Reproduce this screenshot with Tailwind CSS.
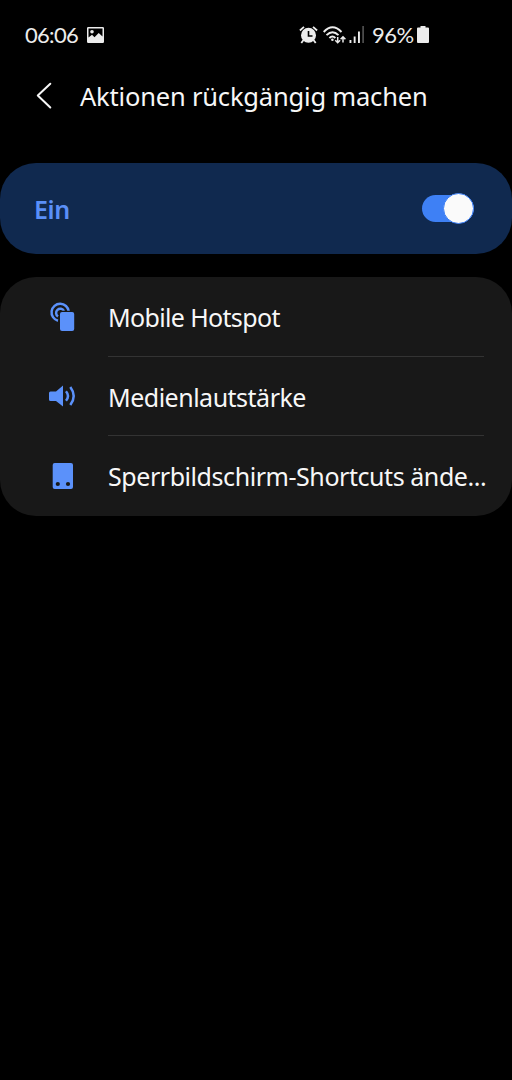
<!DOCTYPE html>
<html lang="de">
<head>
    <meta charset="UTF-8">
    <meta name="viewport" content="width=device-width, initial-scale=1.0">
    <script src="https://cdn.jsdelivr.net/npm/@tailwindcss/browser@4"></script>
    <title>Aktionen rückgängig machen</title>
</head>
<body class="bg-black">
    <main class="w-[512px] h-[1080px] bg-black text-[#f7f7f7] font-['Noto_Sans',sans-serif] overflow-hidden">

        <!-- status bar -->
        <div class="flex items-center h-[69px] pl-[25px] text-[#ececec] font-['Lato',sans-serif] text-[22px] leading-none">
            <span class="w-[62px] whitespace-nowrap tracking-[-0.7px]">06:06</span>
            <svg class="w-[17px] h-[16px]" viewBox="0 0 17 16">
                <path fill="currentColor" fill-rule="evenodd" d="M1.2 0h14.6Q17 0 17 1.2v13.6Q17 16 15.8 16H1.200Q0 16 0 14.8V1.200Q0 0 1.200 0ZM1.5 1.5V10.500l3.500-2.700 2.500 2.400 4.200-4.200 3.800 3.500V1.500Z"/>
                <circle cx="5" cy="4.700" r="1.800" fill="currentColor"/>
            </svg>

            <div class="flex items-center ml-[195px]">
                <svg class="w-[19px] h-[18px]" viewBox="0 0 19 18" fill="none" stroke="currentColor">
                    <circle cx="9.500" cy="9.300" r="7.500" fill="currentColor" stroke="none"/>
                    <path stroke-width="1.800" d="M.900 4.500 5 .900M18.100 4.500 14 .900M4.500 14l-2.200 3M14.500 14l2.200 3"/>
                    <path stroke="#000" stroke-width="1.600" d="M9.500 5v5h4"/>
                </svg>
                <svg class="w-[24px] h-[18px] ml-[5px]" viewBox="0 0 24 18" fill="none" stroke="currentColor">
                    <path stroke-width="1.900" d="M.700 6Q9.500-3.500 18.500 6M3.500 9.200q6-6 12 0M6.400 12q3-2.800 6 0"/>
                    <circle cx="9.400" cy="13.700" r="1.300" fill="currentColor" stroke="none"/>
                    <path stroke-width="1.500" d="M14.700 11v5.500M12.300 14.200l2.400 2.500 2.400-2.500M20 16.500V11M17.600 13.300l2.400-2.500 2.400 2.500"/>
                </svg>
                <svg class="w-[16px] h-[17px] ml-[2px]" viewBox="0 0 16 17" fill="currentColor">
                    <path d="M.500 14h1.900V17H.500zM4.700 10.500h1.900V17H4.700zM9 5.500h1.900V17H9z"/>
                    <path fill="#555" d="M13.300 0h1.600v17h-1.600z"/>
                </svg>
                <span class="w-[44px] ml-[7px] whitespace-nowrap tracking-[-0.5px]">96%</span>
                <svg class="w-[12px] h-[17px] ml-[1px]" viewBox="0 0 12 17" fill="currentColor">
                    <path d="M3.500 0h5v1.600H11q1 0 1 1V16q0 1-1 1H1q-1 0-1-1V2.600q0-1 1-1h2.500z"/>
                </svg>
            </div>
        </div>

        <!-- header -->
        <header class="flex items-center h-[54px] pl-[36px]">
            <svg class="w-[16px] h-[28px]" viewBox="0 0 16 28" fill="none" stroke="currentColor" stroke-width="2" stroke-linecap="round" stroke-linejoin="round">
                <path d="M14.300 1.800 1.800 13.500l12.500 12"/>
            </svg>
            <h1 class="mt-[2px] ml-[28px] text-[25.5px] leading-none whitespace-nowrap tracking-[-0.19px]">Aktionen rückgängig machen</h1>
        </header>

        <!-- main switch -->
        <section class="flex items-center justify-between h-[91px] mt-[40px] pl-[34px] pr-[38px] rounded-[36px] bg-[#10294f]">
            <span class="mt-[2px] text-[25px] leading-none font-semibold tracking-[-0.4px] text-[#5a8ff8]">Ein</span>
            <div class="flex items-center justify-end w-[52px] h-[27px] rounded-full bg-[#3e80f5]">
                <div class="w-[31px] h-[31px] shrink-0 rounded-full bg-[#fafafa] border-[1.5px] border-[#3e80f5]"></div>
            </div>
        </section>

        <!-- actions -->
        <ul class="h-[239px] mt-[23px] rounded-[36px] bg-[#181818] text-[25px] leading-none">
            <li class="flex h-[80px] pl-[48px]">
                <svg class="w-[28px] h-[32px] mt-[24px]" viewBox="0 0 28 32" fill="none" stroke="#5b91fa" stroke-width="2.500">
                    <path d="M10 19.700A8.600 8.600 0 1 1 20.700 10.500M10 15.500A4.200 4.200 0 1 1 16 10"/>
                    <rect x="11" y="9.800" width="16" height="22" rx="2" fill="#181818" stroke="none"/>
                    <rect x="12" y="11" width="14.200" height="19" rx="2" fill="#5b91fa" stroke="none"/>
                </svg>
                <div class="flex items-center w-[376px] ml-[32px] pt-[2px] border-b border-[#333]">
                    <span class="whitespace-nowrap tracking-[-0.65px]">Mobile Hotspot</span>
                </div>
            </li>
            <li class="flex h-[79px] pl-[48px]">
                <svg class="w-[28px] h-[24px] mt-[27px]" viewBox="0 0 28 24" fill="none" stroke="#5b91fa" stroke-width="2.500">
                    <path fill="#5b91fa" stroke="none" d="M2.500 7.500H8L15 1.500V22.500L8 17H2.500Q1 17 1 15.500V9Q1 7.500 2.500 7.500Z"/>
                    <path d="M18 7.200q4 4.800 0 9.600M22.300 3q6.800 9 0 18"/>
                </svg>
                <div class="flex items-center w-[376px] ml-[32px] pt-[2px] border-b border-[#333]">
                    <span class="whitespace-nowrap tracking-[-0.5px]">Medienlautstärke</span>
                </div>
            </li>
            <li class="flex h-[80px] pl-[48px]">
                <svg class="w-[28px] h-[28px] mt-[26px]" viewBox="0 0 28 28">
                    <rect x="4.700" y="1" width="20.300" height="26" rx="2" fill="#5b91fa"/>
                    <circle cx="9.800" cy="22" r="2.100" fill="#181818"/>
                    <circle cx="20" cy="22" r="2.100" fill="#181818"/>
                </svg>
                <div class="flex items-center w-[380px] ml-[32px] pt-[1px]">
                    <span class="whitespace-nowrap tracking-[-0.44px]">Sperrbildschirm-Shortcuts ände...</span>
                </div>
            </li>
        </ul>
    </main>
</body>
</html>
